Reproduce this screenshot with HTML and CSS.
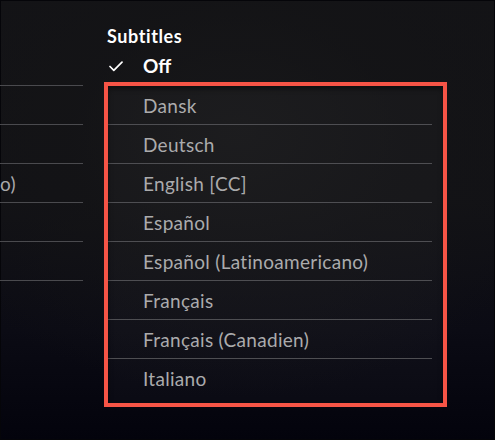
FILE: index.html
```html
<!DOCTYPE html>
<html lang="en">
<head>
<meta charset="utf-8">
<title>Subtitles</title>
<link rel="stylesheet" href="styles.css">
</head>
<body>
<div class="screen">
  <div class="audio-panel">
    <ul class="audio-list">
      <li class="audio-row"></li>
      <li class="audio-row"></li>
      <li class="audio-row"><span>Español (Latinoamericano)</span></li>
      <li class="audio-row"></li>
      <li class="audio-row"></li>
    </ul>
  </div>
  <div class="subs-panel">
    <h2 class="subs-title">Subtitles</h2>
    <div class="subs-current">
      <svg class="check" width="14" height="11" viewBox="0 0 14 11" aria-hidden="true">
        <path d="M1 5.5 L4.8 9.3 L13 1.2" fill="none" stroke="#fff" stroke-width="1.7" stroke-linecap="round" stroke-linejoin="round"/>
      </svg>
      <span>Off</span>
    </div>
    <ul class="subs-list">
      <li class="subs-row">Dansk</li>
      <li class="subs-row">Deutsch</li>
      <li class="subs-row">English [CC]</li>
      <li class="subs-row">Español</li>
      <li class="subs-row">Español (Latinoamericano)</li>
      <li class="subs-row">Français</li>
      <li class="subs-row">Français (Canadien)</li>
      <li class="subs-row">Italiano</li>
    </ul>
  </div>
  <div class="highlight"></div>
</div>
</body>
</html>
```

FILE: styles.css
```css
* { box-sizing: border-box; }

html, body {
  margin: 0;
  padding: 0;
}

body {
  width: 495px;
  height: 440px;
  overflow: hidden;
  font-family: Lato, "Noto Sans", sans-serif;
  background: #04040d;
}

.screen {
  position: relative;
  width: 495px;
  height: 440px;
  display: flex;
  background:
    radial-gradient(ellipse 70% 60% at 48% 30%, rgba(24,24,26,0.9) 0%, rgba(20,20,22,0.6) 50%, rgba(20,20,22,0) 100%),
    linear-gradient(to bottom, #131316 0%, #121216 45%, #0b0b14 75%, #03030c 100%);
  box-shadow: inset 0 0 0 1px #050509;
}

ul {
  list-style: none;
  margin: 0;
  padding: 0;
}

/* left (audio) column, cut off by the viewport */
.audio-panel {
  width: 83px;
  flex: none;
  overflow: hidden;
  padding-top: 85px;
}

.audio-row {
  height: 39px;
  display: flex;
  align-items: center;
  justify-content: flex-end;
  padding-right: 67px;
  border-bottom: 1px solid #4a4a4e;
  color: #a9a9ab;
  font-size: 19px;
  letter-spacing: 0.3px;
  white-space: nowrap;
}

.audio-row:first-child {
  height: 40px;
  border-top: 1px solid #4a4a4e;
}

/* right (subtitles) column */
.subs-panel {
  margin-left: 24px;
  width: 325px;
  padding-top: 26px;
}

.subs-title {
  margin: 0;
  height: 20px;
  line-height: 20px;
  font-size: 18px;
  font-weight: 700;
  color: #ffffff;
  letter-spacing: 0.6px;
}

.subs-current {
  height: 39px;
  display: flex;
  align-items: center;
  gap: 20px;
  padding-left: 2px;
  color: #ffffff;
  font-size: 19px;
  font-weight: 700;
}

.check {
  flex: none;
  margin-top: 2px;
}

.subs-row {
  height: 39px;
  display: flex;
  align-items: center;
  padding-left: 36px;
  border-bottom: 1px solid #4a4a4e;
  color: #a9a9ab;
  font-size: 19px;
  letter-spacing: 0.3px;
  white-space: nowrap;
}

.subs-row:first-child {
  height: 40px;
  border-top: 1px solid #4a4a4e;
}

.subs-row:last-child {
  border-bottom: none;
}

/* red annotation frame drawn over the list */
.highlight {
  position: absolute;
  left: 104px;
  top: 82px;
  width: 343px;
  height: 325px;
  border: 4px solid #f65446;
  background: rgba(255,255,255,0.022);
  box-shadow: inset 0 3px 5px rgba(0,0,0,0.45);
  pointer-events: none;
}
```
